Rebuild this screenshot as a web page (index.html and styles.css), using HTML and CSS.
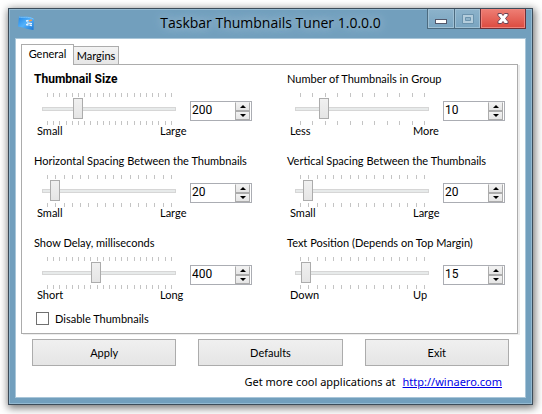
FILE: index.html
```html
<!DOCTYPE html>
<html lang="en">
<head>
<meta charset="utf-8">
<title>Taskbar Thumbnails Tuner 1.0.0.0</title>
<link rel="stylesheet" href="styles.css">
</head>
<body>
<main class="window">
  <header class="titlebar">
    <svg class="app-icon" width="17" height="16" viewBox="0 0 17 16" aria-hidden="true">
      <defs><linearGradient id="flag" x1="0" y1="0" x2="1" y2="1"><stop offset="0" stop-color="#1d84e6"/><stop offset=".5" stop-color="#55b2fa"/><stop offset="1" stop-color="#1673d4"/></linearGradient></defs>
      <path d="M1 1.500C5 2.500 10 .5 16 4L15.500 15C12 14.500 6 13 0 11.500Z" fill="url(#flag)"/>
      <path d="M1 2C5 3 10 1 15.500 4" fill="none" stroke="#7cc4fb"/>
      <path d="M8 6l2.500-.5M8 9.500l2.500.5M11.500 10l2.500.5" stroke="#e8f4ff" stroke-width="1.500"/>
      <path d="M11 6l3-1" stroke="#f09a52" stroke-width="1.500"/>
      <path d="M9 8l5 .5" stroke="#fff"/>
    </svg>
    <h1 class="title">Taskbar Thumbnails Tuner 1.0.0.0</h1>
    <div class="caption-buttons">
      <button class="caption minimize" aria-label="Minimize"><svg width="12" height="5" viewBox="0 0 12 5"><rect x=".5" y=".5" width="11" height="4" fill="#fff" stroke="#53586b"/></svg></button>
      <button class="caption maximize" aria-label="Maximize" disabled><svg width="12" height="10" viewBox="0 0 12 10"><path d="M.5.500h11v9H.5z" fill="#b4cddc" stroke="#6b93ad"/><path d="M3.500 3.500h5v3h-5z" fill="#8fb3c9" stroke="#6b93ad"/></svg></button>
      <button class="caption close" aria-label="Close"><svg width="12" height="11" viewBox="0 0 12 11"><path d="M1 .5h3.500L6 2.500 7.500.5H11v2L8.500 5.500 11 8.500v2H7.500L6 8.500 4.500 10.500H1v-2L3.500 5.500 1 2.500z" fill="#fff" stroke="#6d4455"/></svg></button>
    </div>
  </header>
  <div class="client">
    <div class="tabs" role="tablist">
      <button class="tab active" role="tab" aria-selected="true">General</button>
      <button class="tab" role="tab" aria-selected="false">Margins</button>
    </div>
    <section class="panel" role="tabpanel" aria-label="General">
      <div class="fields">
        <div class="field">
          <label class="name strong" for="size">Thumbnail Size</label>
          <div class="row">
            <div class="slider"><div class="ticks" data-steps="20"></div><input type="range" aria-label="Thumbnail Size slider" max="100" value="25"><div class="ticks" data-steps="20"></div></div>
            <div class="spinner"><input id="size" type="text" value="200"><button class="step up" aria-label="Increase"></button><button class="step down" aria-label="Decrease"></button></div>
          </div>
          <div class="scale"><span>Small</span><span class="end">Large</span></div>
        </div>
        <div class="field">
          <label class="name" for="count">Number of Thumbnails in Group</label>
          <div class="row">
            <div class="slider"><div class="ticks" data-steps="10"></div><input type="range" aria-label="Number of Thumbnails slider" max="100" value="20"><div class="ticks" data-steps="10"></div></div>
            <div class="spinner"><input id="count" type="text" value="10"><button class="step up" aria-label="Increase"></button><button class="step down" aria-label="Decrease"></button></div>
          </div>
          <div class="scale"><span>Less</span><span class="end">More</span></div>
        </div>
        <div class="field">
          <label class="name" for="hspace">Horizontal Spacing Between the Thumbnails</label>
          <div class="row">
            <div class="slider"><div class="ticks" data-steps="15"></div><input type="range" aria-label="Horizontal Spacing slider" max="300" value="20"><div class="ticks" data-steps="15"></div></div>
            <div class="spinner"><input id="hspace" type="text" value="20"><button class="step up" aria-label="Increase"></button><button class="step down" aria-label="Decrease"></button></div>
          </div>
          <div class="scale"><span>Small</span><span class="end">Large</span></div>
        </div>
        <div class="field">
          <label class="name" for="vspace">Vertical Spacing Between the Thumbnails</label>
          <div class="row">
            <div class="slider"><div class="ticks" data-steps="15"></div><input type="range" aria-label="Vertical Spacing slider" max="300" value="20"><div class="ticks" data-steps="15"></div></div>
            <div class="spinner"><input id="vspace" type="text" value="20"><button class="step up" aria-label="Increase"></button><button class="step down" aria-label="Decrease"></button></div>
          </div>
          <div class="scale"><span>Small</span><span class="end">Large</span></div>
        </div>
        <div class="field">
          <label class="name" for="delay">Show Delay, milliseconds</label>
          <div class="row">
            <div class="slider"><div class="ticks" data-steps="20"></div><input type="range" aria-label="Show Delay slider" max="1000" value="400"><div class="ticks" data-steps="20"></div></div>
            <div class="spinner"><input id="delay" type="text" value="400"><button class="step up" aria-label="Increase"></button><button class="step down" aria-label="Decrease"></button></div>
          </div>
          <div class="scale"><span>Short</span><span class="end">Long</span></div>
        </div>
        <div class="field">
          <label class="name" for="position">Text Position (Depends on Top Margin)</label>
          <div class="row">
            <div class="slider"><div class="ticks" data-steps="15"></div><input type="range" aria-label="Text Position slider" max="300" value="15"><div class="ticks" data-steps="15"></div></div>
            <div class="spinner"><input id="position" type="text" value="15"><button class="step up" aria-label="Increase"></button><button class="step down" aria-label="Decrease"></button></div>
          </div>
          <div class="scale"><span>Down</span><span class="end">Up</span></div>
        </div>
      </div>
      <label class="check"><input type="checkbox">Disable Thumbnails</label>
    </section>
    <div class="actions">
      <button class="action">Apply</button>
      <button class="action">Defaults</button>
      <button class="action">Exit</button>
    </div>
    <footer class="footer"><span>Get more cool applications at</span><a href="http://winaero.com">http://winaero.com</a></footer>
  </div>
</main>
<script src="ticks.js"></script>
</body>
</html>
```
FILE: ticks.js
```js
document.querySelectorAll(".ticks").forEach(function (row) {
  for (var i = 0; i <= Number(row.dataset.steps); i++) {
    row.appendChild(document.createElement("i"));
  }
});
```
FILE: styles.css
```css
* { box-sizing: border-box; }
body {
  margin: 0;
  padding: 8px 9px 9px 8px;
  background: #fff;
  color: #000;
  font: 11px/14px Lato, "Liberation Sans", sans-serif;
}
button, input { font: inherit; color: inherit; margin: 0; padding: 0; border-radius: 0; }
.window {
  border: 1px solid #3c4c5a;
  background: #729fbd;
  box-shadow: inset 0 0 0 1px #93b9d1, 1px 2px 8px 1px rgba(0, 0, 0, .55);
  padding: 0 6px 6px;
}
.titlebar { display: flex; align-items: flex-start; height: 29px; }
.app-icon { flex: none; margin: 6px 0 0 3px; }
.title {
  flex: 1;
  margin: 4px 0 0 79px;
  text-align: center;
  font: 14px/20px "Open Sans", sans-serif;
  text-shadow: 0 0 8px #a5c3d6, 0 0 12px #a5c3d6;
  white-space: nowrap;
}
.caption-buttons { display: flex; margin-left: auto; }
.caption {
  display: flex;
  align-items: center;
  justify-content: center;
  width: 27px;
  height: 20px;
  border: 1px solid #4c6b80;
  border-top: 0;
  border-right: 0;
  background: linear-gradient(#8db3cb, #79a4c0);
  box-shadow: inset 0 0 0 1px #9fc0d4;
}
.minimize svg { margin-top: 5px; }
.maximize { width: 26px; }
.close {
  width: 46px;
  border: 1px solid #6e2f36;
  border-top: 0;
  background: linear-gradient(#ee7f75, #dc4a3f);
  box-shadow: inset 0 0 0 1px #f0837b;
}
.client { background: #fff; border: 1px solid #a9c6d9; padding: 5px 5px 0; }
.tabs { display: flex; align-items: flex-end; height: 20px; }
.tab {
  width: 45px;
  height: 18px;
  border: 1px solid #acacac;
  border-left: 0;
  border-bottom: 0;
  background: linear-gradient(#f3f3f3, #e6e6e6);
}
.tab.active {
  position: relative;
  width: 53px;
  height: 21px;
  margin-bottom: -1px;
  padding-bottom: 2px;
  border-left: 1px solid #acacac;
  background: #fff;
}
.panel {
  border: 1px solid #acacac;
  box-shadow: 2px 1px 0 #ededed;
  margin-right: 2px;
  padding: 7px 12px 8px;
}
.fields {
  display: grid;
  grid-template-columns: repeat(2, minmax(0, 1fr));
  gap: 16px 35px;
}
.name { display: block; height: 21px; white-space: nowrap; }
.strong { font: 700 12px/14px Roboto, sans-serif; }
.row { display: flex; align-items: flex-start; gap: 14px; padding-left: 8px; }
.slider { flex: 1; min-width: 0; height: 31px; }
.ticks { display: flex; justify-content: space-between; height: 4px; padding: 0 4px 0 5px; }
.ticks i { width: 1px; background: #c4c4c4; }
.slider input {
  display: block;
  appearance: none;
  width: 100%;
  height: 21px;
  margin: 1px 0 2px;
  background: transparent;
}
.slider input::-webkit-slider-runnable-track {
  height: 4px;
  border: 1px solid #d6d6d6;
  background: #e7eaea;
}
.slider input::-webkit-slider-thumb {
  appearance: none;
  box-sizing: border-box;
  width: 10px;
  height: 21px;
  margin: -10px -1px 0;
  border: 1px solid #acacac;
  border-radius: 0;
  background: linear-gradient(#f0f0f0, #e5e5e5);
}
.spinner {
  display: grid;
  grid-template: 1fr 1fr / 1fr 15px;
  flex: none;
  width: 62px;
  height: 20px;
  margin-top: 8px;
  padding-right: 1px;
  border: 1px solid #abadb3;
}
.spinner input {
  grid-row: span 2;
  width: 100%;
  min-width: 0;
  padding: 0 0 2px 1px;
  border: 0;
  background: #fff;
  font: 12px/14px Roboto, sans-serif;
}
.step {
  display: flex;
  align-items: center;
  justify-content: center;
  border: 1px solid #acacac;
  background: linear-gradient(#f2f2f2, #e5e5e5);
}
.step::before { content: ""; border: 3px solid transparent; }
.up { border-top-color: #f0f0f0; }
.up::before { border-top: 0; border-bottom-color: #000; }
.down::before { border-bottom: 0; border-top-color: #000; }
.scale { display: flex; justify-content: space-between; padding-left: 3px; }
.end { width: 92px; }
.check { display: flex; align-items: center; gap: 6px; margin-top: 10px; padding-left: 2px; height: 13px; }
.check input {
  appearance: none;
  width: 13px;
  height: 13px;
  border: 1px solid #707070;
  background: #fff;
}
.actions { display: flex; gap: 22px; padding: 5px 11px 0 11px; }
.action {
  flex: 1;
  height: 27px;
  border: 1px solid #acacac;
  background: linear-gradient(#f0f0f0, #e5e5e5);
}
.footer {
  display: flex;
  justify-content: flex-end;
  gap: 7px;
  padding: 8px 18px 7px 0;
  font: 11px/16px "Noto Sans", sans-serif;
}
.footer a { color: #0000e6; }
```
